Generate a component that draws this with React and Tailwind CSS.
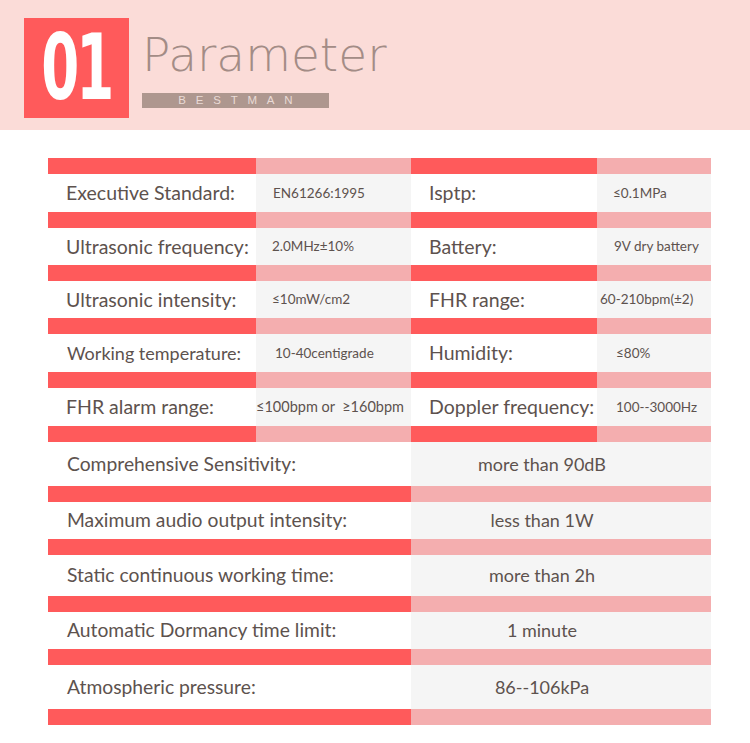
import React from "react";

const RED = "bg-[#ff5a5b]";
const PINK = "bg-[#f4aeaf]";

const pairRows = [
  { h: "h-[38px]", a: "Executive Standard:", av: "EN61266:1995", avPad: "pl-[17px]", b: "Isptp:", bv: "≤0.1MPa", bvPad: "pl-[16px]" },
  { h: "h-[37px]", a: "Ultrasonic frequency:", av: "2.0MHz±10%", avPad: "pl-[16px]", b: "Battery:", bv: "9V dry battery", bvPad: "pl-[17px]" },
  { h: "h-[37px]", a: "Ultrasonic intensity:", av: "≤10mW/cm2", avPad: "pl-[16px]", b: "FHR range:", bv: "60-210bpm(±2)", bvPad: "pl-[3px]" },
  { h: "h-[38px]", a: "Working temperature:", av: "10-40centigrade", avPad: "pl-[19px]", b: "Humidity:", bv: "≤80%", bvPad: "pl-[19px]", small: true },
  { h: "h-[38px]", a: "FHR alarm range:", av: "≤100bpm or  ≥160bpm", avPad: "pl-[0px] text-[14.5px]", b: "Doppler frequency:", bv: "100--3000Hz", bvPad: "pl-[19px]" },
];

const wideRows = [
  { h: "h-[44px]", a: "Comprehensive Sensitivity:", v: "more than 90dB" },
  { h: "h-[37px]", a: "Maximum audio output intensity:", v: "less than 1W" },
  { h: "h-[41px]", a: "Static continuous working time:", v: "more than 2h" },
  { h: "h-[37px]", a: "Automatic Dormancy time limit:", v: "1 minute" },
  { h: "h-[44px]", a: "Atmospheric pressure:", v: "86--106kPa" },
];

function QuadBar() {
  return (
    <div className="grid grid-cols-[208px_155px_186px_114px] h-[16px]">
      <div className={RED} />
      <div className={PINK} />
      <div className={RED} />
      <div className={PINK} />
    </div>
  );
}

function WideBar() {
  return (
    <div className="grid grid-cols-[363px_300px] h-[16px]">
      <div className={RED} />
      <div className={PINK} />
    </div>
  );
}

export default function App() {
  return (
    <div className="w-[750px] h-[743px] bg-white overflow-hidden text-[#5d524e]" style={{ fontFamily: "Lato, 'DejaVu Sans', sans-serif" }}>
      {/* header */}
      <div className="h-[130px] bg-[#fbdcd8] flex items-start pl-[24px] pt-[18px]">
        <div className="w-[105px] h-[100px] bg-[#ff5a5b] flex items-center justify-center">
          <span
            className="text-white font-bold text-[82px] leading-none tracking-[-4px] scale-x-[0.74] scale-y-[1.1]"
            style={{ fontFamily: "'DejaVu Sans Condensed', 'DejaVu Sans', sans-serif" }}
          >
            01
          </span>
        </div>
        <div className="ml-[13px] flex flex-col">
          <div
            className="text-[#a38c86] text-[47px] leading-none mt-[13px]"
            style={{ fontFamily: "'DejaVu Sans', sans-serif", fontWeight: 200 }}
          >
            Parameter
          </div>
          <div className="mt-[15px] w-[187px] h-[15px] bg-[#ae978f] flex items-center justify-center">
            <span className="text-[#eadbd6] text-[11.5px] tracking-[0.85em] pl-[0.85em]" style={{ fontFamily: "'Liberation Sans', sans-serif" }}>
              BESTMAN
            </span>
          </div>
        </div>
      </div>

      {/* table */}
      <div className="mt-[28px] ml-[48px] w-[663px]">
        {pairRows.map((r, i) => (
          <div key={i}>
            <QuadBar />
            <div className={`grid grid-cols-[208px_155px_186px_114px] ${r.h}`}>
              <div className={`flex items-center bg-white ${r.small ? "text-[18px] pl-[19px]" : "text-[19.5px] pl-[18px]"} whitespace-nowrap`}>{r.a}</div>
              <div className={`flex items-center bg-[#f5f5f5] text-[13.5px] whitespace-pre ${r.avPad}`}>{r.av}</div>
              <div className="flex items-center bg-white pl-[18px] text-[19.5px] whitespace-nowrap">{r.b}</div>
              <div className={`flex items-center bg-[#f5f5f5] text-[13.5px] whitespace-nowrap ${r.bvPad}`}>{r.bv}</div>
            </div>
          </div>
        ))}
        {wideRows.map((r, i) => (
          <div key={i}>
            {i === 0 ? <QuadBar /> : <WideBar />}
            <div className={`grid grid-cols-[363px_300px] ${r.h}`}>
              <div className="flex items-center bg-white pl-[19px] text-[19.3px] whitespace-nowrap">{r.a}</div>
              <div className="flex items-center justify-center bg-[#f5f5f5] pr-[38px] text-[18px] whitespace-nowrap">{r.v}</div>
            </div>
          </div>
        ))}
        <WideBar />
      </div>
    </div>
  );
}
